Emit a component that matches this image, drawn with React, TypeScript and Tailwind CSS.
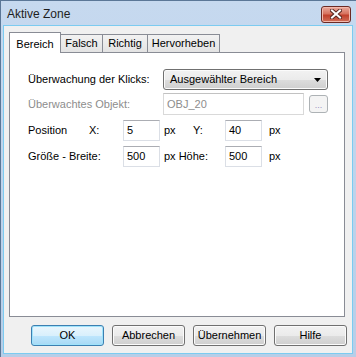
import React from "react";

const font = { fontFamily: '"Liberation Sans", Arial, sans-serif' };

const WinButton: React.FC<{ label: string; primary?: boolean }> = ({ label, primary }) => (
  <button
    className={`w-[73px] h-[21px] rounded-[3px] border text-[11px] text-black flex items-center justify-center ${
      primary
        ? "border-[#3c7fb1] bg-[linear-gradient(#eaf6fd_0%,#d9f0fc_50%,#bee6fd_51%,#a7d9f5_100%)] shadow-[inset_0_0_0_1px_#9fe3fb]"
        : "border-[#707070] bg-[linear-gradient(#f2f2f2_0%,#ebebeb_50%,#dddddd_51%,#cfcfcf_100%)] shadow-[inset_0_0_0_1px_#fbfbfb]"
    }`}
  >
    {label}
  </button>
);

const Field: React.FC<{ value: string }> = ({ value }) => (
  <div className="w-[37px] h-[21px] bg-white border border-[#dbdfe6] border-t-[#abadb3] flex items-center pl-[3px] text-[11px] text-black">
    {value}
  </div>
);

const tabs = [
  { label: "Bereich", w: "w-[52px]", active: true },
  { label: "Falsch", w: "w-[42px]" },
  { label: "Richtig", w: "w-[45px]" },
  { label: "Hervorheben", w: "w-[72px]" },
];

export default function App() {
  return (
    <div
      className="w-[356px] h-[357px] flex flex-col bg-[linear-gradient(#c6d9ef,#b7cee8)] border-l border-t border-[#5b7797]"
      style={font}
    >
      {/* Title bar */}
      <div className="h-[24px] flex items-center justify-between pl-[6px] pr-[5px]">
        <span className="text-[12px] text-[#1e1e1e] pt-[2px]">Aktive Zone</span>
        <div className="w-[30px] h-[17px] mt-[2px] rounded-[3px] border border-[#6b2a24] bg-[linear-gradient(#e9a99d_0%,#d7735f_45%,#c1402c_55%,#d0705a_100%)] flex items-center justify-center shadow-[inset_0_0_0_1px_#f2b9ac]">
          <svg width="12" height="10" viewBox="0 0 12 10">
            <path d="M2 1.5 L10 8.5 M10 1.5 L2 8.5" stroke="#5a2a22" strokeWidth="4" strokeLinecap="square" />
            <path d="M2 1.5 L10 8.5 M10 1.5 L2 8.5" stroke="#ffffff" strokeWidth="2" strokeLinecap="square" />
          </svg>
        </div>
      </div>

      {/* Client area */}
      <div className="ml-[2px] mr-[3px] mb-[3px] flex-1 flex flex-col bg-[#f0f0f0] border border-[#7ccbf0] pt-[6px] pl-[5px]">
        {/* Tabs */}
        <div className="h-[21px] flex items-end relative z-10">
          {tabs.map((t) =>
            t.active ? (
              <div
                key={t.label}
                className={`${t.w} h-[21px] bg-white border border-b-0 border-[#898c95] text-[11px] text-black flex items-start justify-center pt-[3px]`}
              >
                {t.label}
              </div>
            ) : (
              <div
                key={t.label}
                className={`${t.w} h-[19px] bg-[linear-gradient(#f2f2f2,#e3e3e3)] border border-l-0 border-[#898c95] text-[11px] text-black flex items-center justify-center`}
              >
                {t.label}
              </div>
            )
          )}
        </div>

        {/* Panel */}
        <div className="w-[336px] h-[265px] -mt-[1px] bg-white border border-[#898c95] pt-[16px] pl-[18px] text-[11px] text-black flex flex-col">
          <div className="flex items-center h-[21px]">
            <span className="w-[135px]">Überwachung der Klicks:</span>
            <div className="w-[165px] h-[21px] rounded-[3px] border border-[#707070] bg-[linear-gradient(#f2f2f2_0%,#ebebeb_50%,#dddddd_51%,#cfcfcf_100%)] shadow-[inset_0_0_0_1px_#fbfbfb] flex items-center justify-between pl-[6px] pr-[6px]">
              <span>Ausgewählter Bereich</span>
              <svg width="7" height="4" viewBox="0 0 7 4">
                <path d="M0 0 H7 L3.5 4 Z" fill="#000" />
              </svg>
            </div>
          </div>

          <div className="flex items-center h-[22px] mt-[3px]">
            <span className="w-[135px] text-[#8d8d8d]">Überwachtes Objekt:</span>
            <div className="w-[141px] h-[22px] bg-white border border-[#d9d9d9] border-t-[#c2c2c2] flex items-center pl-[3px] text-[#8d8d8d]">
              OBJ_20
            </div>
            <div className="ml-[5px] w-[19px] h-[18px] rounded-[3px] border border-[#adb2b5] bg-[#f4f4f4] flex items-end justify-center pb-[2px] text-[9px] leading-none text-[#9b8fc0]">
              ...
            </div>
          </div>

          <div className="flex items-center h-[21px] mt-[5px]">
            <span className="w-[61px]">Position</span>
            <span className="w-[34px]">X:</span>
            <Field value="5" />
            <span className="w-[29px] ml-[4px]">px</span>
            <span className="w-[32px]">Y:</span>
            <Field value="40" />
            <span className="ml-[7px]">px</span>
          </div>

          <div className="flex items-center h-[21px] mt-[5px]">
            <span className="w-[95px]">Größe - Breite:</span>
            <Field value="500" />
            <span className="w-[61px] ml-[4px]">px Höhe:</span>
            <Field value="500" />
            <span className="ml-[7px]">px</span>
          </div>
        </div>

        {/* Buttons */}
        <div className="flex gap-[8px] mt-[8px] ml-[22px]">
          <WinButton label="OK" primary />
          <WinButton label="Abbrechen" />
          <WinButton label="Übernehmen" />
          <WinButton label="Hilfe" />
        </div>
      </div>
    </div>
  );
}
